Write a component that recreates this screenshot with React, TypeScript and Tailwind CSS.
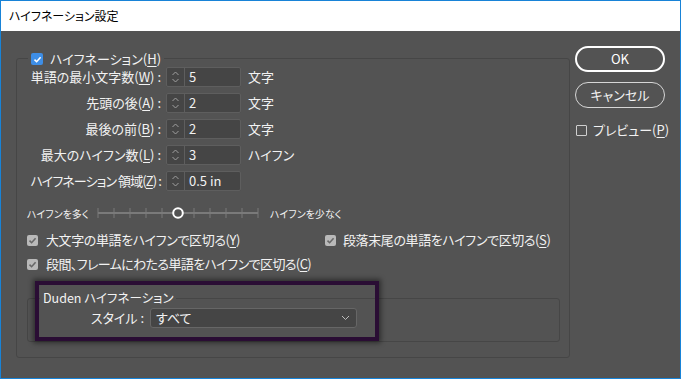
import React from "react";

const font = "font-['Noto_Sans_CJK_JP','Noto_Sans',sans-serif] [font-feature-settings:'palt']";

function CheckIcon({ color }: { color: string }) {
  return (
    <svg width="9" height="9" viewBox="0 0 9 9">
      <path d="M1.5 4.6 L3.6 6.7 L7.6 2.2" fill="none" stroke={color} strokeWidth="1.6" />
    </svg>
  );
}

function GrayCheck() {
  return (
    <div className="w-[11px] h-[11px] rounded-[2px] bg-[#b9b9b9] flex items-center justify-center shrink-0">
      <CheckIcon color="#676767" />
    </div>
  );
}

function Spinner() {
  return (
    <div className="w-[18px] h-full border-r border-[#5e5e5e] flex items-center justify-center">
      <svg width="9" height="14" viewBox="0 0 9 14">
        <path d="M1.5 5 L4.5 2 L7.5 5" fill="none" stroke="#a0a0a0" strokeWidth="1" />
        <path d="M1.5 9 L4.5 12 L7.5 9" fill="none" stroke="#a0a0a0" strokeWidth="1" />
      </svg>
    </div>
  );
}

function Row({ label, k, value, unit, tight }: { label: string; k: string; value: string; unit?: string; tight?: boolean }) {
  return (
    <div className="h-[20px] flex items-center">
      <div className={`w-[144px] text-right whitespace-nowrap ${tight ? "tracking-[-0.9px]" : ""}`}>
        {label}(<span className="underline underline-offset-2">{k}</span>) :
      </div>
      <div className="ml-[5px] w-[75px] h-[20px] border border-[#5e5e5e] rounded-[2px] bg-[#454545] flex items-center">
        <Spinner />
        <span className="pl-[4px]">{value}</span>
      </div>
      {unit && <span className="ml-[7px] whitespace-nowrap">{unit}</span>}
    </div>
  );
}

function Slider() {
  const ticks = [];
  for (let i = 0; i < 11; i++) {
    if (i === 5) continue;
    const x = 2 + i * 16;
    ticks.push(<line key={i} x1={x} y1={5} x2={x} y2={15} stroke="#7a7a7a" strokeWidth="1" />);
  }
  return (
    <svg width="164" height="20" viewBox="0 0 164 20" className="ml-[5px] shrink-0">
      <line x1="2" y1="10" x2="162" y2="10" stroke="#7a7a7a" strokeWidth="2" />
      {ticks}
      <circle cx="82" cy="10" r="4.8" fill="#535353" stroke="#ffffff" strokeWidth="2" />
    </svg>
  );
}

export default function App() {
  return (
    <div className={`relative w-[681px] h-[379px] border border-[#1883d7] flex flex-col text-[13px] ${font}`}>
      <div className="h-[30px] bg-white flex items-center pl-[8px] text-[12px] text-black shrink-0">
        ハイフネーション設定
      </div>
      <div className="flex-1 bg-[#535353] text-[#f2f2f2] flex">
        {/* left */}
        <div className="pl-[15px] pt-[27px] shrink-0">
          <div className="w-[554px] h-[300px] border border-[#464646] rounded-[3px] flex flex-col">
            <div className="-mt-[8px] ml-[11px] h-[16px] px-[3px] w-fit bg-[#535353] flex items-center">
              <div className="w-[12px] h-[12px] rounded-[2px] bg-[#3e8ee6] flex items-center justify-center">
                <CheckIcon color="#ffffff" />
              </div>
              <span className="ml-[7px] whitespace-nowrap">
                ハイフネーション(<span className="underline underline-offset-2">H</span>)
              </span>
            </div>
            <div className="flex flex-col gap-[6px]">
              <Row label="単語の最小文字数" k="W" value="5" unit="文字" />
              <Row label="先頭の後" k="A" value="2" unit="文字" />
              <Row label="最後の前" k="B" value="2" unit="文字" />
              <Row label="最大のハイフン数" k="L" value="3" unit="ハイフン" />
              <Row label="ハイフネーション 領域" k="Z" value="0.5 in" tight />
            </div>
            <div className="mt-[12px] ml-[10px] h-[20px] flex items-center text-[10px]">
              <span className="w-[64px] whitespace-nowrap">ハイフンを多く</span>
              <Slider />
              <span className="ml-[10px] whitespace-nowrap">ハイフンを少なく</span>
            </div>
            <div className="mt-[8px] ml-[10px] h-[18px] flex items-center tracking-[-0.4px]">
              <div className="w-[298px] flex items-center">
                <GrayCheck />
                <span className="ml-[8px] whitespace-nowrap">
                  大文字の単語をハイフンで区切る(<span className="underline underline-offset-2">Y</span>)
                </span>
              </div>
              <GrayCheck />
              <span className="ml-[7px] whitespace-nowrap">
                段落末尾の単語をハイフンで区切る(<span className="underline underline-offset-2">S</span>)
              </span>
            </div>
            <div className="mt-[6px] ml-[10px] h-[18px] flex items-center tracking-[-0.6px]">
              <GrayCheck />
              <span className="ml-[8px] whitespace-nowrap">
                段間、フレームにわたる単語をハイフンで区切る(<span className="underline underline-offset-2">C</span>)
              </span>
            </div>
            <div className="mt-[25px] ml-[10px] w-[533px] h-[44px] border border-[#464646] rounded-[3px] flex flex-col">
              <div className="-mt-[9px] ml-[12px] h-[16px] px-[3px] w-fit bg-[#535353] flex items-center text-[12.5px] whitespace-nowrap">
                Duden ハイフネーション
              </div>
              <div className="mt-[2px] h-[20px] flex items-center">
                <div className="w-[116px] text-right whitespace-nowrap">スタイル :</div>
                <div className="ml-[6px] w-[207px] h-[20px] border border-[#666666] rounded-[3px] bg-[#454545] flex items-center justify-between pl-[5px] pr-[6px]">
                  <span>すべて</span>
                  <svg width="9" height="6" viewBox="0 0 9 6">
                    <path d="M1 1 L4.5 4.5 L8 1" fill="none" stroke="#bdbdbd" strokeWidth="1" />
                  </svg>
                </div>
              </div>
            </div>
          </div>
        </div>
        {/* right */}
        <div className="ml-[5px] pt-[15px] flex flex-col">
          <div className="w-[90px] h-[26px] rounded-full border-2 border-white flex items-center justify-center text-white">
            OK
          </div>
          <div className="mt-[10px] w-[90px] h-[26px] rounded-full border border-[#d6d6d6] flex items-center justify-center">
            キャンセル
          </div>
          <div className="mt-[15px] ml-[1px] h-[14px] flex items-center">
            <div className="w-[11px] h-[11px] border border-[#cfcfcf] rounded-[1px]" />
            <span className="ml-[6px] whitespace-nowrap">
              プレビュー(<span className="underline underline-offset-2">P</span>)
            </span>
          </div>
        </div>
      </div>
      {/* highlight annotation overlay */}
      <div className="absolute left-[34px] top-[280px] w-[344px] h-[60px] border-[4px] border-[#2a0d34] shadow-[0_0_5px_2px_rgba(0,0,0,0.45)] pointer-events-none" />
    </div>
  );
}
